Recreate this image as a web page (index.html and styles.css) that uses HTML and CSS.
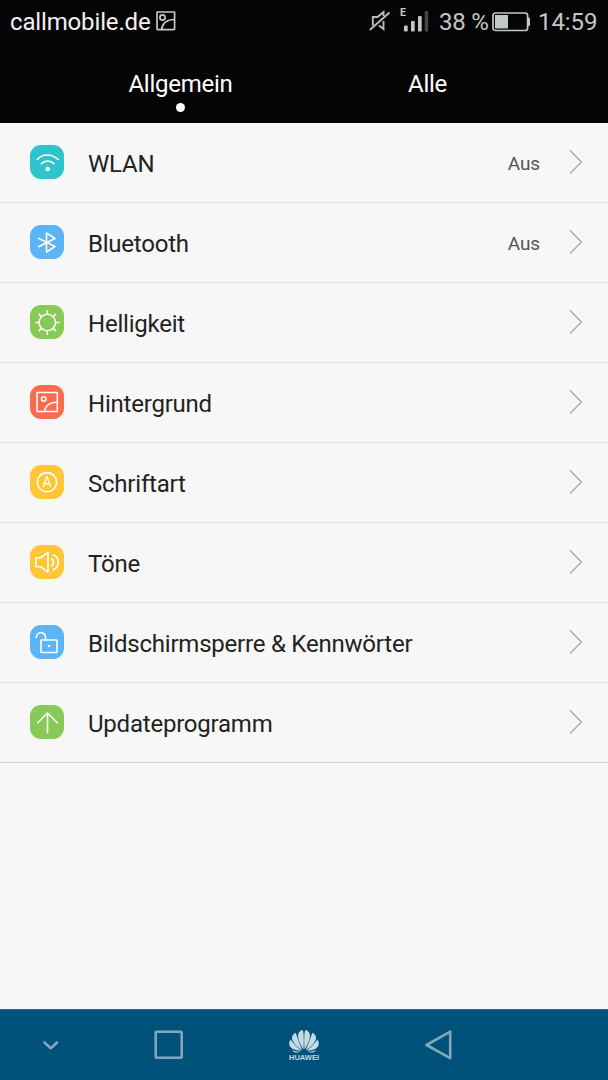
FILE: index.html
```html
<!DOCTYPE html>
<html lang="de">
<head>
<meta charset="utf-8">
<title>Einstellungen</title>
<link rel="stylesheet" href="styles.css">
</head>
<body>
<div class="screen">
  <header class="header">
    <div class="status">
      <span class="carrier">callmobile.de</span>
      <svg class="shot" width="20" height="20" viewBox="0 0 20 20" fill="none" stroke="#c4c7c7" stroke-width="1.7"><rect x="1" y="1" width="17.6" height="17.6" rx=".5"/><circle cx="6.5" cy="6.5" r="2.6"/><path d="M5.5 18.5C6.5 12 11.500 8.500 18.500 8.500"/></svg>
      <svg class="mute" width="22" height="24" viewBox="0 0 22 24" fill="none" stroke="#bbbdbd" stroke-width="1.9"><path d="M5 15.500H3.800V8H8.500L14.500 3V7"/><path d="M10 16.500L14.500 20V12"/><path d="M.8 21L20.500 3.500"/></svg>
      <span class="net">E</span>
      <svg class="signal" width="26" height="22" viewBox="0 0 26 22" fill="#c4c7c7"><rect x="1" y="15.500" width="3.700" height="6" rx="1"/><rect x="8" y="11" width="3.700" height="10.500" rx="1"/><rect x="15" y="6" width="3.700" height="15.500" rx="1"/><rect x="21.700" y="1" width="3.500" height="20.500" rx="1" fill="#474747"/></svg>
      <span class="percent">38 %</span>
      <svg class="battery" width="39" height="20" viewBox="0 0 39 20"><rect x="1" y="1" width="34.600" height="17.500" rx="2.500" fill="none" stroke="#c4c7c7" stroke-width="1.700"/><path d="M36 5.500h1q1 0 1 1v6.500q0 1-1 1h-1z" fill="#c4c7c7"/><rect x="3" y="3" width="13" height="13.500" fill="#c4c7c7"/></svg>
      <span class="clock">14:59</span>
    </div>
    <nav class="tabs">
      <div class="tab active">Allgemein</div>
      <div class="tab">Alle</div>
    </nav>
  </header>

  <main class="list">
    <div class="row">
      <svg class="icon teal" viewBox="0 0 34 34"><path d="M7.200 14.500C12.500 8.500 21.500 8.500 28.200 14.500M11.400 18.700C14.800 15 20.500 15 24 18.700"/><circle class="solid" cx="17.700" cy="24" r="2.300"/></svg>
      <span class="label">WLAN</span><span class="value">Aus</span>
      <svg class="chevron" viewBox="0 0 14 26"><path d="M1 1.500L12.500 13L1 24.500"/></svg>
    </div>
    <div class="row">
      <svg class="icon blue" viewBox="0 0 34 34"><path d="M8.500 13.200L25 21.500L16.500 27V8L25 13.500L8.500 21.800"/></svg>
      <span class="label">Bluetooth</span><span class="value">Aus</span>
      <svg class="chevron" viewBox="0 0 14 26"><path d="M1 1.500L12.500 13L1 24.500"/></svg>
    </div>
    <div class="row">
      <svg class="icon green" viewBox="0 0 34 34"><circle cx="17.300" cy="17.500" r="8.200"/><path d="M17.300 9V5.700M17.300 26v3.300M9 17.500H5.700M25.600 17.500h3.300M11.400 11.600L9.200 9.400M23.200 11.600l2.200-2.200M11.400 23.400l-2.200 2.200M23.200 23.400l2.200 2.200"/></svg>
      <span class="label">Helligkeit</span>
      <svg class="chevron" viewBox="0 0 14 26"><path d="M1 1.500L12.500 13L1 24.500"/></svg>
    </div>
    <div class="row">
      <svg class="icon red" viewBox="0 0 34 34"><rect x="7" y="7.500" width="20.300" height="19"/><circle cx="13.700" cy="14" r="2.200"/><path d="M14.500 26.500C15.500 20.500 20 17.300 27 17.300"/></svg>
      <span class="label">Hintergrund</span>
      <svg class="chevron" viewBox="0 0 14 26"><path d="M1 1.500L12.500 13L1 24.500"/></svg>
    </div>
    <div class="row">
      <svg class="icon yellow" viewBox="0 0 34 34"><circle cx="17" cy="17.200" r="9.600"/><text class="glyph" x="17" y="22.200" text-anchor="middle">A</text></svg>
      <span class="label">Schriftart</span>
      <svg class="chevron" viewBox="0 0 14 26"><path d="M1 1.500L12.500 13L1 24.500"/></svg>
    </div>
    <div class="row">
      <svg class="icon yellow" viewBox="0 0 34 34"><path d="M6 12.700H10.500L18 7.500V27L10.500 21.700H6ZM21.500 13.500C24.200 15 24.200 19.500 21.500 21M23.300 9.700C30 13 30 21.500 23.300 25"/></svg>
      <span class="label">Töne</span>
      <svg class="chevron" viewBox="0 0 14 26"><path d="M1 1.500L12.500 13L1 24.500"/></svg>
    </div>
    <div class="row">
      <svg class="icon blue" viewBox="0 0 34 34"><rect x="11" y="15" width="16" height="12.500" rx=".5"/><path d="M6.300 12.800C6.300 6 15.500 6 15.500 12.500V15"/><rect class="solid" x="17.900" y="20" width="2.200" height="2.200"/></svg>
      <span class="label">Bildschirmsperre &amp; Kennwörter</span>
      <svg class="chevron" viewBox="0 0 14 26"><path d="M1 1.500L12.500 13L1 24.500"/></svg>
    </div>
    <div class="row last">
      <svg class="icon green" viewBox="0 0 34 34"><path d="M17.500 27.700V8M7.700 17.700L17.500 8L27.300 17.700"/></svg>
      <span class="label">Updateprogramm</span>
      <svg class="chevron" viewBox="0 0 14 26"><path d="M1 1.500L12.500 13L1 24.500"/></svg>
    </div>
  </main>

  <footer class="navbar">
    <svg class="hide" width="18" height="12" viewBox="0 0 18 12"><path d="M2.500 2.500L8.700 8.200L15 2.500"/></svg>
    <svg class="recent" width="30" height="30" viewBox="0 0 30 30"><rect x="1.700" y="1.700" width="26" height="26" rx="1"/></svg>
    <div class="brand">
      <svg width="32" height="24" viewBox="0 0 32 24"><g id="petals"><path d="M15.400 20.500C11.500 14.500 8.500 7 11 3.300C12.200 1.700 13.800 1.100 14.700 1C16 4 16 13 15.400 20.500Z"/><path d="M14.200 21C8 17.500 3.500 12 4 8.200C4.500 5.700 6.500 4.200 7.700 3.800C9.500 9 11.500 15 14.200 21Z"/><path d="M13.300 21.500C7 21.500 2.500 19.500 1.500 16.500C.7 13.800 1.800 11.500 2.600 10.500C5.500 14.500 9 18.500 13.300 21.500Z"/><path d="M12.500 22.400C10 24 6 24.200 3.800 20.900C6.500 22.300 9.500 22.500 12.500 22.400Z"/></g><use href="#petals" transform="translate(32 0) scale(-1 1)"/></svg>
      <span>HUAWEI</span>
    </div>
    <svg class="back" width="29" height="32" viewBox="0 0 29 32"><path d="M26.200 2.600V29.200L2.500 16Z"/></svg>
  </footer>
</div>
</body>
</html>
```
FILE: styles.css
```css
* { box-sizing: border-box; }

body {
  margin: 0;
  font-family: Roboto, "Noto Sans", sans-serif;
}

svg { display: block; flex: none; }

.screen {
  display: flex;
  flex-direction: column;
  width: 608px;
  height: 1080px;
  background: #f7f7f7;
  overflow: hidden;
  white-space: nowrap;
}

.header {
  height: 123px;
  background: #050505;
  color: #fff;
}

.status {
  display: flex;
  align-items: center;
  height: 44px;
  padding-left: 10px;
  font-size: 24px;
  color: #c4c7c7;
}

.carrier { width: 145px; color: #f2f2f2; letter-spacing: -0.15px; }
.shot { margin: 0 0 2px 1px; }
.mute { margin: 0 0 2px 193px; }
.net { width: 10px; margin: 0 -7px 19px 9px; font-size: 10.5px; font-weight: 700; line-height: 12px; }
.signal { margin-bottom: 2px; }
.percent { width: 52px; margin-left: 10px; letter-spacing: -0.2px; }
.battery { margin-left: 1px; }
.clock { margin-left: 7px; letter-spacing: -0.1px; }

.tabs {
  display: flex;
  padding: 0 57px;
}

.tab {
  display: flex;
  flex-direction: column;
  align-items: center;
  width: 247px;
  height: 79px;
  padding-top: 25px;
  font-size: 24px;
  line-height: 30px;
  letter-spacing: -0.25px;
}

.tab.active::after {
  content: "";
  width: 9px;
  height: 9px;
  margin-top: 4px;
  border-radius: 50%;
  background: #fff;
}

.list { flex: 1; }

.row {
  display: flex;
  align-items: center;
  height: 80px;
  padding: 0 25px 1px 30px;
  border-bottom: 1px solid #e1e1e1;
}

.row.last { border-color: #d2d2d2; }

.icon {
  width: 34px;
  height: 34px;
  border-radius: 11px;
  fill: none;
  stroke: #fff;
  stroke-width: 1.6;
  stroke-linejoin: round;
  stroke-linecap: round;
}

.teal { background: #2dc4cb; }
.blue { background: #5ab4f5; }
.green { background: #87ca57; }
.red { background: #ff694c; }
.yellow { background: #ffc736; }
.solid { fill: #fff; stroke: none; }
.glyph { fill: #fff; stroke: none; font: 14px Roboto, sans-serif; }

.label {
  flex: 1;
  padding: 4px 0 0 24px;
  font-size: 24px;
  letter-spacing: -0.22px;
  color: #222;
}

.value {
  padding-top: 3px;
  margin-right: 29px;
  font-size: 19px;
  letter-spacing: -0.1px;
  color: #555;
}

.chevron {
  width: 14px;
  height: 26px;
  fill: none;
  stroke: #a2a2a2;
  stroke-width: 1.2;
}

.navbar {
  display: flex;
  align-items: center;
  height: 71px;
  padding: 1px 0 0 42px;
  background: #00527a;
  border-top: 1px solid #2d6584;
  fill: none;
  stroke: #80a8bd;
  stroke-width: 2.6;
  stroke-linecap: round;
  stroke-linejoin: round;
}

.recent { margin: 0 0 1px 94px; }

.brand {
  display: flex;
  flex-direction: column;
  align-items: center;
  width: 34px;
  margin-left: 103px;
  color: #c6dae3;
  fill: #c6dae3;
  stroke: none;
}

.brand span {
  font: 700 7.500px/9px "Liberation Sans", sans-serif;
}

.back { margin: 0 0 1px 103px; }
```
